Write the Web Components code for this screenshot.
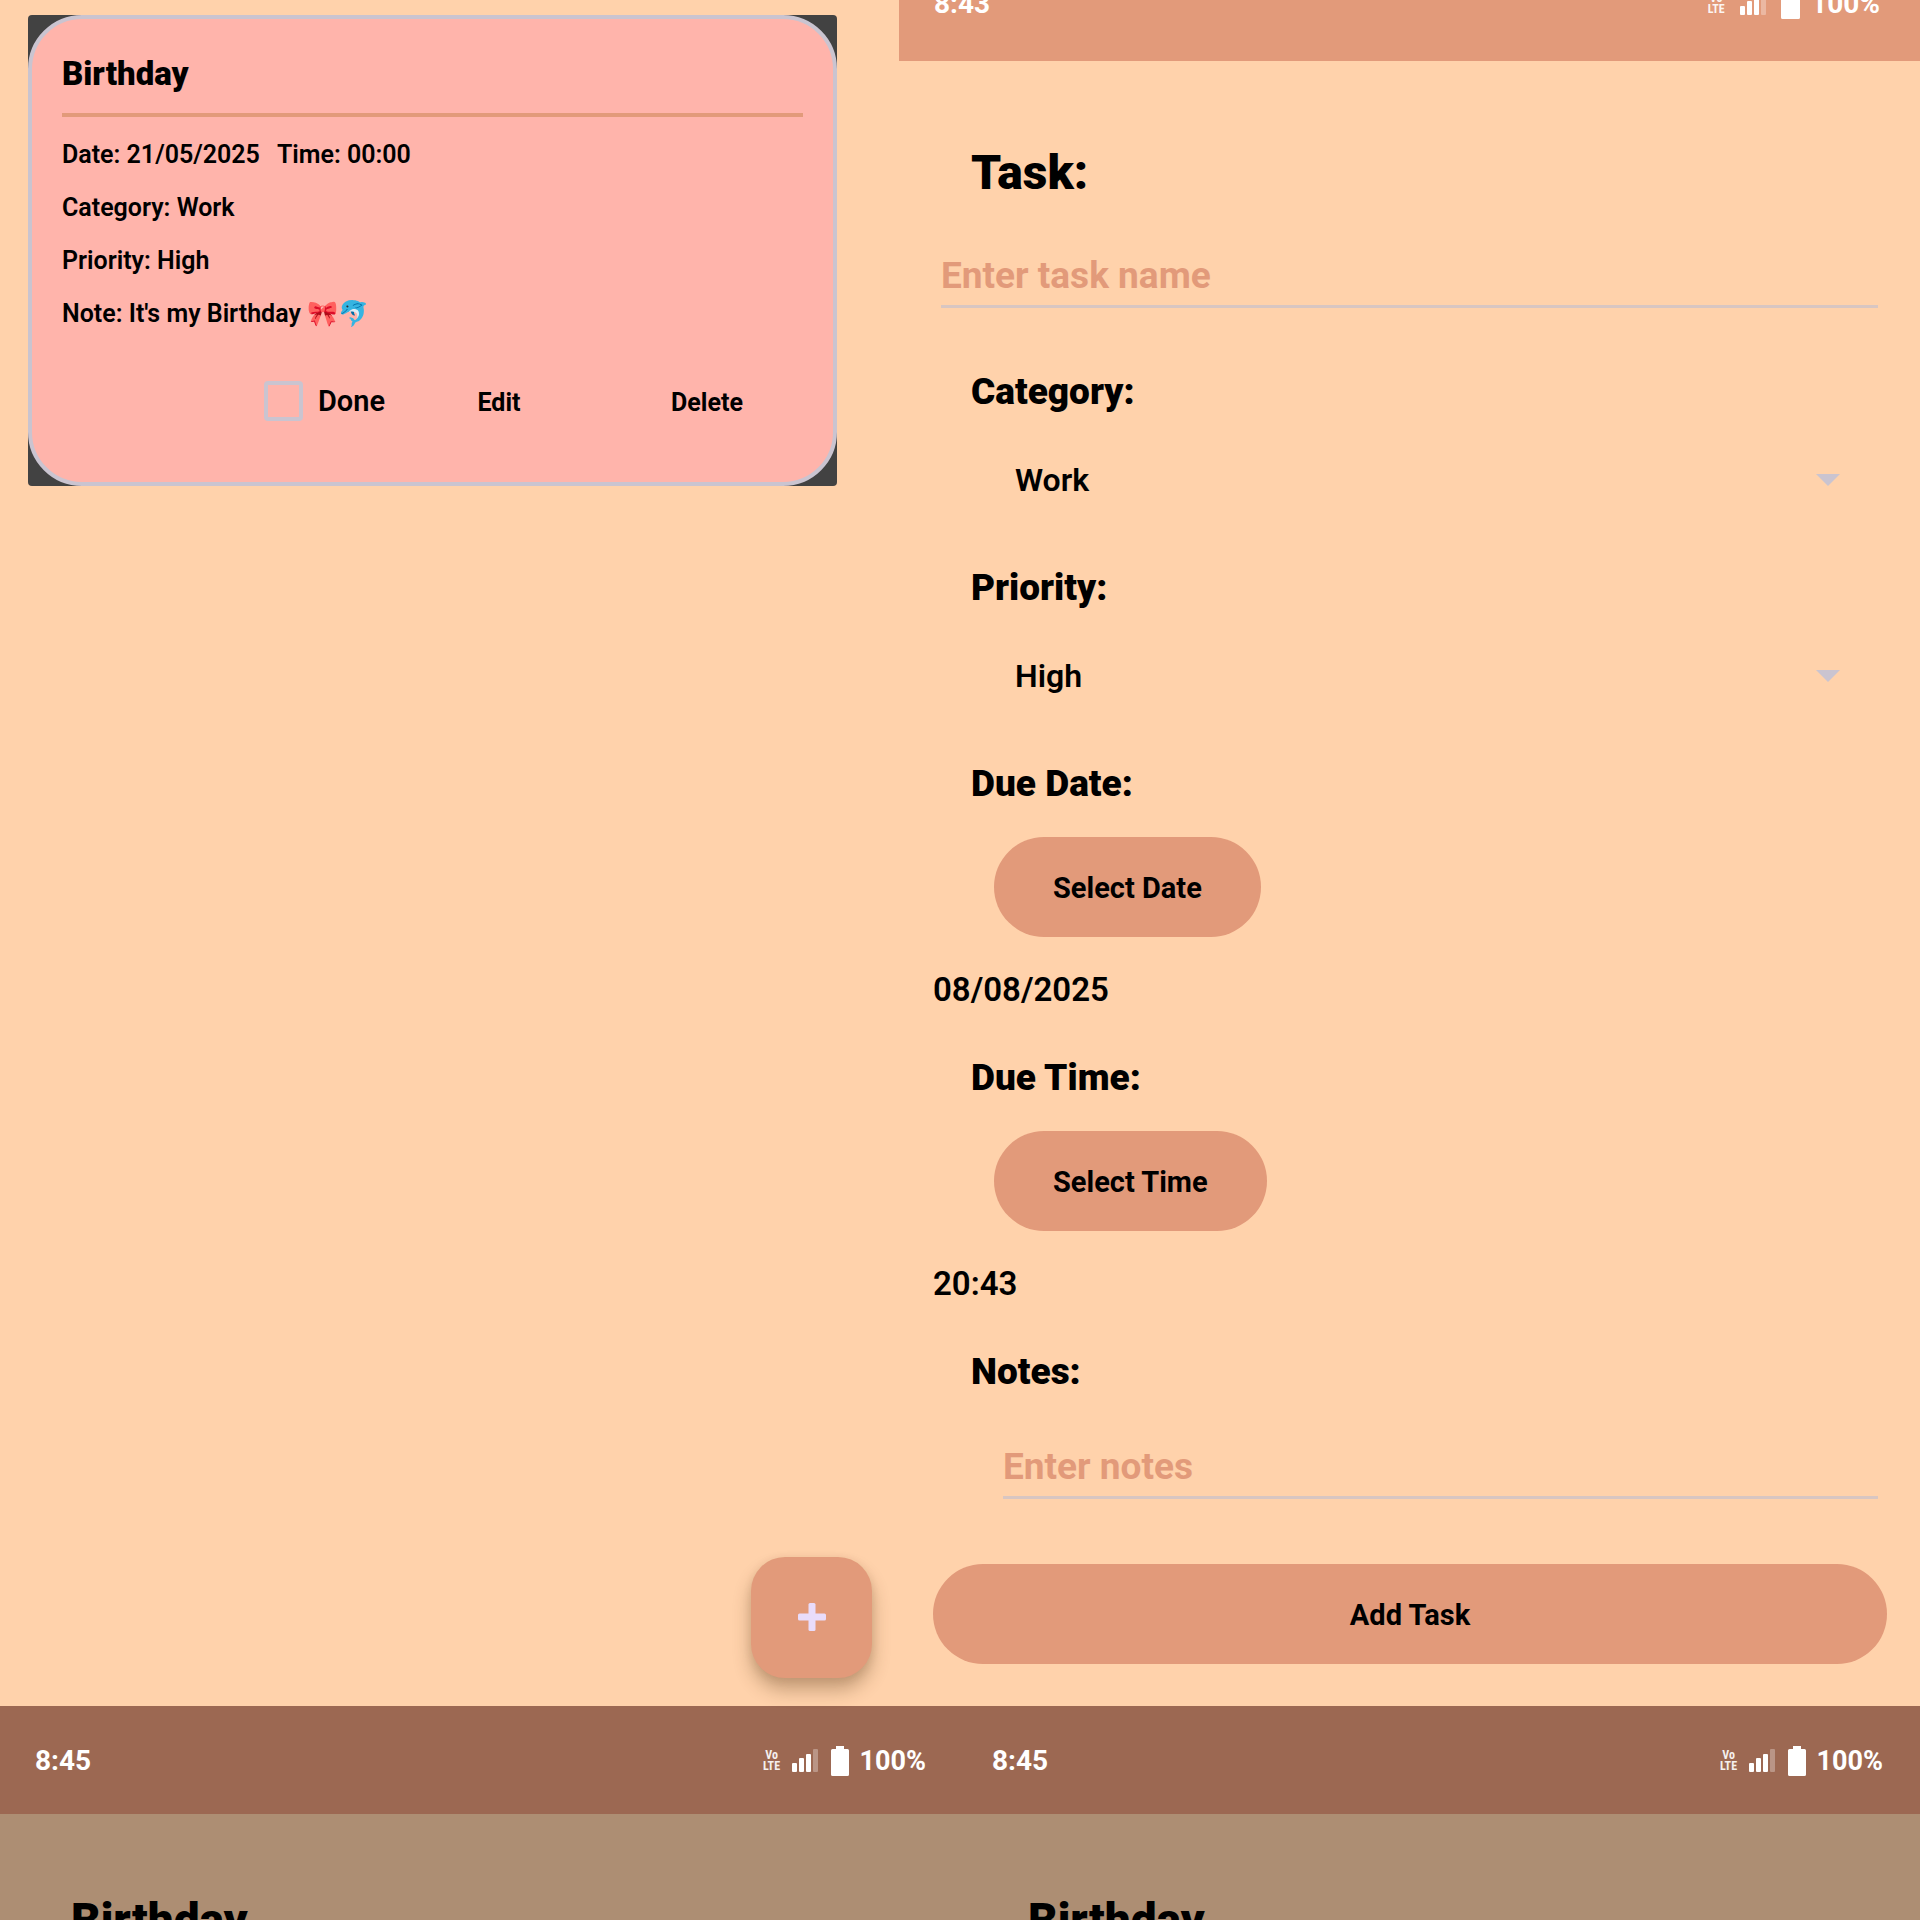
<!DOCTYPE html>
<html lang="en">
<head>
<meta charset="utf-8">
<title>Task planner</title>
<style>
:root{--peach:#ffd2ab;--clay:#e29a7a;--line:#cac4d0;--pink:#ffb4ab}
body{margin:0;font-family:Roboto,"Liberation Sans",sans-serif;color:#000;background:var(--peach);height:100vh;overflow:hidden}
</style>
</head>
<body>
<planner-board></planner-board>
<script>
const define=(name,html)=>customElements.define(name,class extends HTMLElement{
  constructor(){super();this.attachShadow({mode:'open'}).innerHTML=html;}
});

define('status-bar',`<style>
:host{display:flex;align-items:center;justify-content:space-between;box-sizing:border-box;height:108px;padding:1px var(--edge,31px) 0 35px;color:#fff;font-size:28px;font-weight:700;line-height:32px}
.right{display:flex;align-items:center;font-size:27px}
.volte{font:700 12px/11px "Liberation Sans Narrow","Roboto Condensed",Roboto,sans-serif;text-align:center;width:18px;margin-right:11px;opacity:.9}
.volte span{display:block;height:11px}
.signal{width:26px;height:24px;margin-right:13px}
.battery{width:18px;height:30px;margin-right:11px}
:host([large]) .right{font-size:28px}
:host([large]) .signal{width:28px}
:host([large]) .battery{width:19px}
:host([large]) .volte,:host([large]) .signal{margin-right:14px}
</style>
<slot></slot>
<div class="right">
<div class="volte"><span>Vo</span><span>LTE</span></div>
<svg class="signal" viewBox="0 0 26 24" fill="#fff"><rect y="14" width="5" height="9" rx="1"/><rect x="7" y="9" width="5" height="14" rx="1"/><rect x="14" y="5" width="5" height="18" rx="1"/><rect x="21" width="5" height="23" rx="1" opacity=".3"/></svg>
<svg class="battery" viewBox="0 0 18 30" preserveAspectRatio="none" fill="#fff"><path d="M5 0h8v3h3.500q1.500 0 1.500 1.500v24q0 1.500-1.500 1.500h-15q-1.500 0-1.500-1.500v-24q0-1.500 1.500-1.500H5z"/></svg>
<span>100%</span>
</div>`);

define('pill-button',`<style>
:host{display:block}
button{font:inherit;font-size:29px;line-height:32px;font-weight:700;color:#000;background:var(--clay);border:0;border-radius:50px;height:100px;padding:2px 59px 0;width:100%;display:block}
</style><button type="button"><slot></slot></button>`);

define('task-card',`<style>
:host{display:block;background:#424242;border-radius:4px}
article{border:4px solid var(--line);border-radius:54px;background:var(--pink);padding:35px 30px 51px}
h2{margin:0 0 19px;font-size:33px;line-height:40px;font-weight:900}
hr{border:0;margin:0 0 11px;height:4px;background:var(--clay)}
p{margin:0;font-size:25px;line-height:53px;font-weight:600;display:flex;gap:17px}
.actions{display:flex;justify-content:flex-end;align-items:center;gap:16px;margin-top:31px;height:60px}
label{display:flex;align-items:center;gap:15px;font-size:29px;line-height:32px;font-weight:600;margin-right:2px}
input{appearance:none;margin:0;width:39px;height:40px;border:4px solid var(--line);border-radius:4px}
button{font:inherit;font-size:25px;line-height:32px;font-weight:700;color:#000;background:none;border:0;padding:4px 0 0;width:192px}
</style>
<article>
<h2>Birthday</h2><hr>
<p><span>Date: 21/05/2025</span><span>Time: 00:00</span></p>
<p>Category: Work</p>
<p>Priority: High</p>
<p>Note: It's my Birthday 🎀🐬</p>
<div class="actions"><label><input type="checkbox">Done</label><button type="button">Edit</button><button type="button">Delete</button></div>
</article>`);

define('task-list',`<style>
:host{display:block;position:relative;box-sizing:border-box;padding:15px 62px 0 28px}
.add{position:absolute;right:27px;bottom:28px;width:121px;height:121px;border:0;border-radius:34px;background:var(--clay);padding:0 0 2px;display:flex;align-items:center;justify-content:center;box-shadow:0 12px 18px rgba(80,50,20,.32),0 2px 8px rgba(80,50,20,.1)}
svg{width:30px;height:30px}
</style>
<task-card></task-card>
<button class="add" type="button" aria-label="Add"><svg viewBox="0 0 30 30" fill="#e9dcfb"><rect x="11.500" y="1" width="7" height="28" rx="1.500"/><rect x="1" y="11.500" width="28" height="7" rx="1.500"/></svg></button>`);

define('task-form',`<style>
:host{display:flex;flex-direction:column}
.top{height:61px;overflow:hidden;display:flex;flex-direction:column;justify-content:flex-end;background:var(--clay)}
.top status-bar{flex:none;height:116px;--edge:40px}
form{display:flex;flex-direction:column;padding:80px 33px 42px 34px}
label,.caption{font-size:37px;line-height:48px;font-weight:900;margin-left:38px}
label.main{font-size:48px;line-height:64px}
input{font:inherit;font-size:37px;line-height:48px;height:48px;font-weight:700;color:#000;background:none;border:0;border-bottom:3px solid #d8c6c2;padding:0 0 5px;margin:47px 9px 60px 8px;outline:0;border-radius:0}
input::placeholder{color:var(--clay);opacity:1}
input.notes{margin-left:70px;margin-bottom:65px}
.pick{display:flex;align-items:center;margin:40px 46px 60px 82px}
select{appearance:none;flex:1;font:inherit;font-size:32px;line-height:48px;height:48px;font-weight:600;color:#000;background:none;border:0;padding:0}
.pick svg{width:26px;height:13px}
.row{display:flex;margin:29px 61px 29px}
output{font-size:33px;line-height:48px;font-weight:600;margin-bottom:40px}
</style>
<div class="top"><status-bar large>8:43</status-bar></div>
<form>
<label class="main" for="name">Task:</label>
<input id="name" placeholder="Enter task name">
<label for="cat">Category:</label>
<div class="pick"><select id="cat"><option>Work</option></select><svg viewBox="0 0 26 13"><path d="M1 0h24L13 12z" fill="#cac4d0"/></svg></div>
<label for="pri">Priority:</label>
<div class="pick"><select id="pri"><option>High</option></select><svg viewBox="0 0 26 13"><path d="M1 0h24L13 12z" fill="#cac4d0"/></svg></div>
<div class="caption">Due Date:</div>
<div class="row"><pill-button>Select Date</pill-button></div>
<output>08/08/2025</output>
<div class="caption">Due Time:</div>
<div class="row"><pill-button>Select Time</pill-button></div>
<output>20:43</output>
<label for="notes">Notes:</label>
<input class="notes" id="notes" placeholder="Enter notes">
<pill-button>Add Task</pill-button>
</form>`);

define('dimmed-screen',`<style>
:host{display:block;background:#ad8e73}
status-bar{background:#9c6852}
h2{margin:78px 0 0 71px;font-size:46px;line-height:56px;font-weight:900}
</style><status-bar>8:45</status-bar><h2>Birthday</h2>`);

define('planner-board',`<style>
:host{display:grid}
.upper{display:grid;grid-template-columns:899fr 1021fr}
.lower{display:grid;grid-template-columns:957fr 963fr}
.lower dimmed-screen:last-child{--edge:37px}
</style>
<div class="upper"><task-list></task-list><task-form></task-form></div>
<div class="lower"><dimmed-screen></dimmed-screen><dimmed-screen></dimmed-screen></div>`);
</script>
</body>
</html>
